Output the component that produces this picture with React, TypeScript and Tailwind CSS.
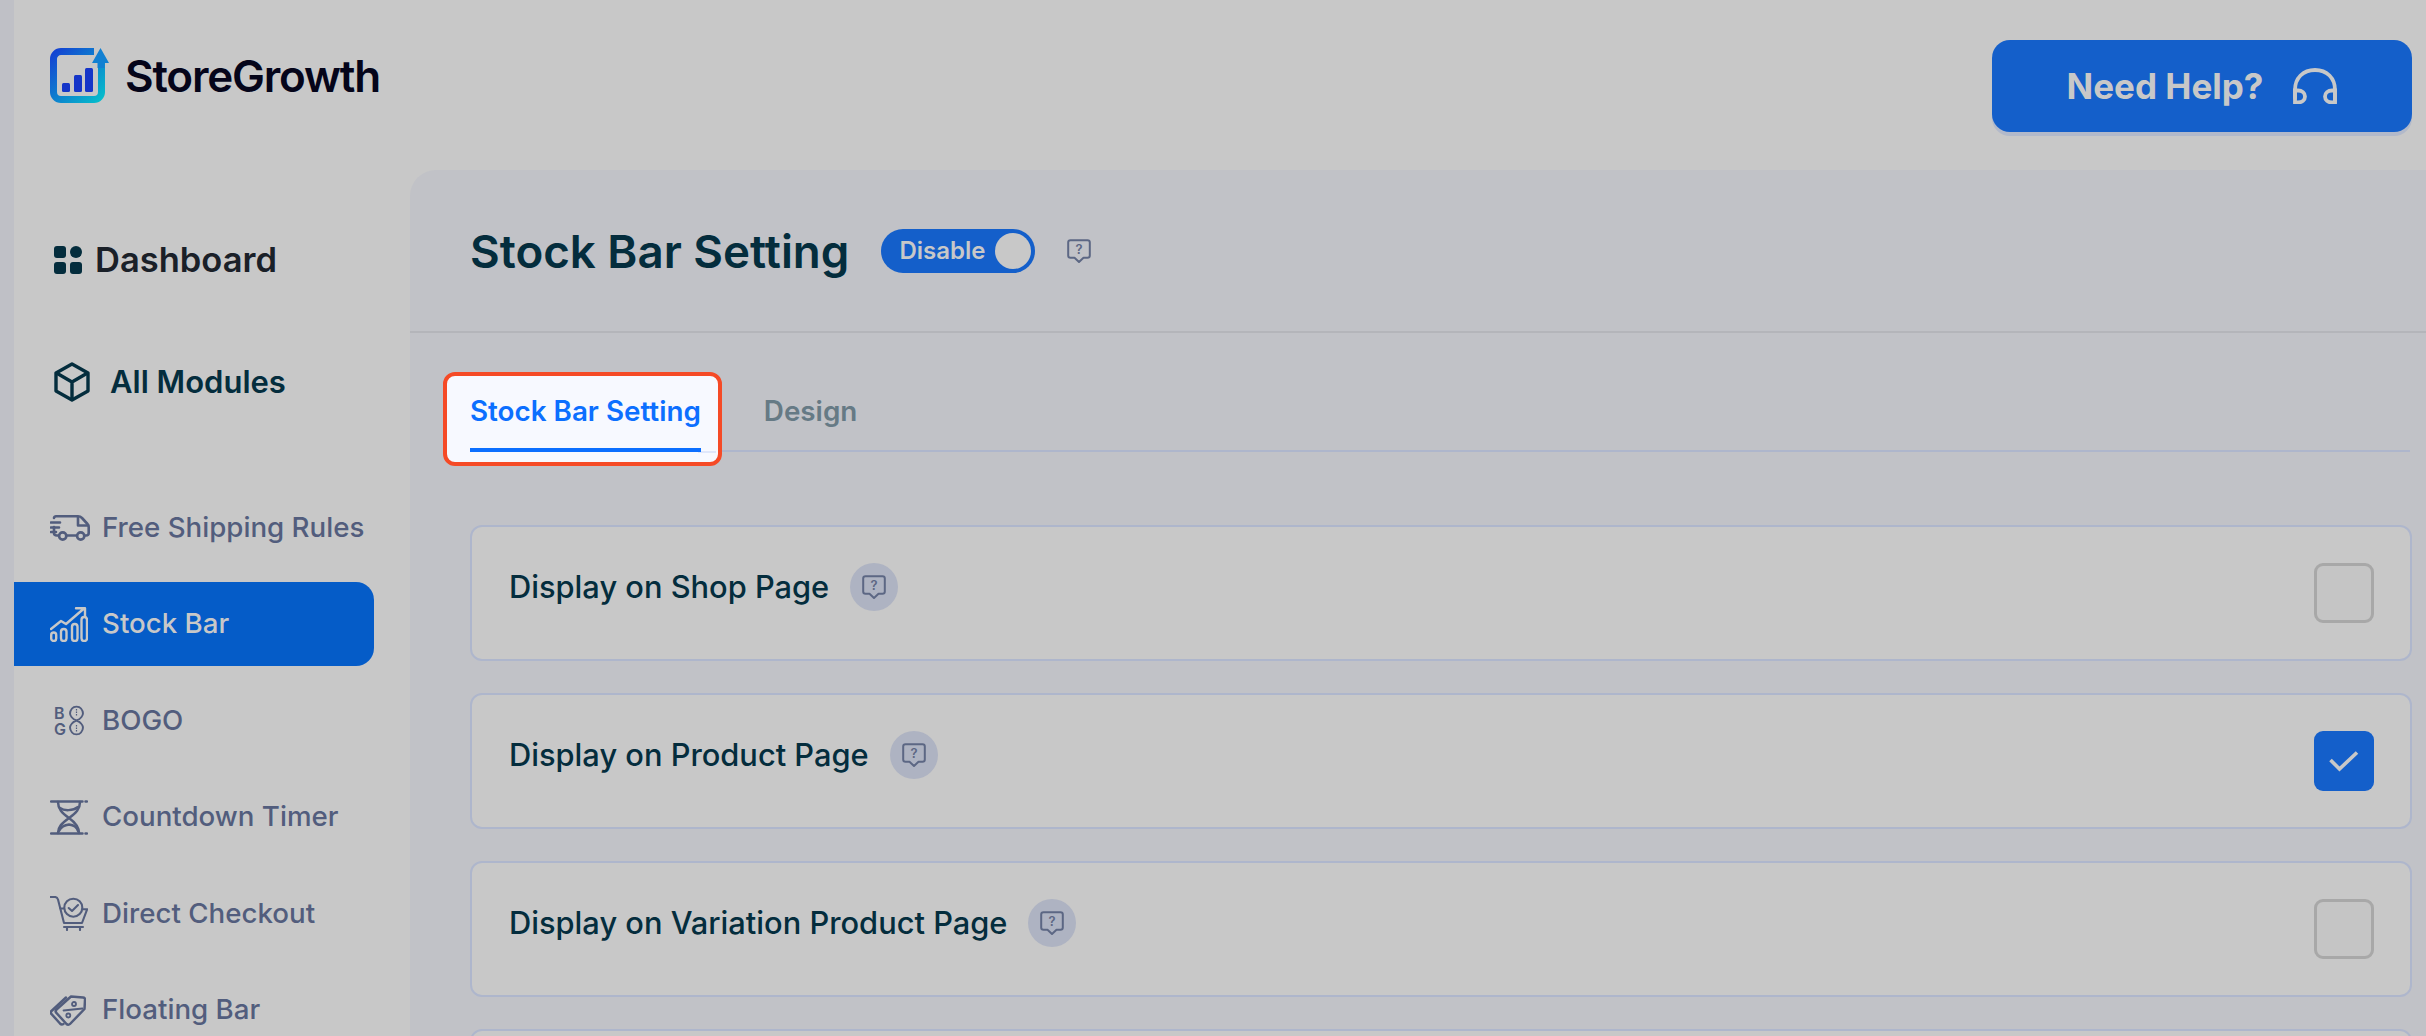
import React from "react";

const font = { fontFamily: "Inter, 'Liberation Sans', sans-serif" };

function Logo() {
  return (
    <svg width="60" height="56" viewBox="0 0 60 56" fill="none">
      <defs>
        <linearGradient id="lg" x1="0" y1="0" x2="1" y2="1">
          <stop offset="0" stopColor="#1442d2" />
          <stop offset="1" stopColor="#06bccb" />
        </linearGradient>
      </defs>
      <path d="M44 3.5H11A7.5 7.5 0 0 0 3.5 11V44A7.5 7.5 0 0 0 11 51.5H44A7.5 7.5 0 0 0 51.5 44V14" stroke="url(#lg)" strokeWidth="7" />
      <path d="M42 15L50.5 0L59 15H54.5V20H47.5V15Z" fill="#1280d2" />
      <rect x="12" y="35" width="8" height="9" rx="1.5" fill="#1535c8" />
      <rect x="24" y="27" width="8" height="17" rx="1.5" fill="#1535c8" />
      <rect x="35" y="20" width="8" height="24" rx="1.5" fill="#1535c8" />
    </svg>
  );
}

function DashIcon() {
  return (
    <svg width="28" height="28" viewBox="0 0 28 28" fill="#042d3d">
      <rect x="0" y="0" width="12" height="12" rx="3" />
      <circle cx="22" cy="6" r="6" />
      <rect x="0" y="16" width="12" height="12" rx="3" />
      <rect x="16" y="16" width="12" height="12" rx="3" />
    </svg>
  );
}

function BoxIcon() {
  return (
    <svg width="36" height="40" viewBox="0 0 36 40" fill="none" stroke="#042d3d" strokeWidth="3.4" strokeLinejoin="round">
      <path d="M18 2L34 11V29L18 38L2 29V11Z" />
      <path d="M2.5 11L18 20L33.5 11M18 20V38" />
    </svg>
  );
}

const N = "#525d7d";

function TruckIcon() {
  return (
    <svg width="40" height="26" viewBox="0 0 40 26" fill="none" stroke={N} strokeWidth="2.6" strokeLinecap="round" strokeLinejoin="round">
      <path d="M4 3C4 2 5 1.3 6 1.3H28C30 1.3 31 2 32 3L37.5 9C38.5 10 38.7 11 38.7 12V18C38.7 19.5 38 20.5 36 20.5H35" />
      <path d="M28 2V10.5H38" />
      <path d="M1 7.5H10M1 12.5H9M1 17H6" />
      <path d="M4 12V18C4 19.5 5 20.5 7 20.5H8.5M17 20.5H26.5" />
      <circle cx="12.7" cy="21" r="3.6" />
      <circle cx="30.7" cy="21" r="3.6" />
    </svg>
  );
}

function StockIcon({ color }: { color: string }) {
  return (
    <svg width="38" height="35" viewBox="0 0 38 35" fill="none" stroke={color} strokeWidth="2.4" strokeLinecap="round" strokeLinejoin="round">
      <rect x="1.2" y="25.5" width="5" height="8.5" rx="2.5" />
      <rect x="11" y="22" width="5.5" height="12" rx="2.7" />
      <rect x="22" y="17" width="5.5" height="17" rx="2.7" />
      <rect x="31.5" y="10" width="5.5" height="24" rx="2.7" />
      <path d="M1 22L11 14L16 17L34 1.5M26 1.2H35V9" />
    </svg>
  );
}

function BogoIcon() {
  return (
    <span className="flex items-center pl-[4px]">
      <span className="flex w-[15px] flex-col text-[16px] leading-[16px] font-semibold text-[#525d7d]">
        <span>B</span>
        <span>G</span>
      </span>
      <svg width="15" height="31" viewBox="0 0 15 31" fill="none" stroke={N} strokeWidth="1.9">
        <path d="M2.5 12C4 14 6 15 7.5 15.5C9 16 11 17 12.5 19C14.5 21.5 14 25 12 27.5C10 30 5 30 3 27.5C1 25 0.5 21.5 2.5 19C4 17 6 16 7.5 15.5C9 15 11 14 12.5 12C14.5 9.5 14 6 12 3.5C10 1 5 1 3 3.5C1 6 0.5 9.5 2.5 12Z" />
        <path d="M7.5 4V11M7.5 20V27" strokeWidth="1.2" strokeDasharray="1.5 1" />
      </svg>
    </span>
  );
}

function HourglassIcon() {
  return (
    <svg width="38" height="35" viewBox="0 0 38 35" fill="none" stroke={N} strokeWidth="2.5" strokeLinecap="round" strokeLinejoin="round">
      <path d="M1 1.5H32.5M35.5 1.5H37M1 33.5H32.5M35.5 33.5H37" />
      <path d="M8 2C8 9 12 13 19 18C26 23 29 27 29 33M30 2C30 9 26 13 19 18C12 23 8 27 8 33" />
      <path d="M10 8C14 11 23 11 28 7" />
      <path d="M9 31C11 27 15 25 19 24.5C23 25 27 27 28 31" />
    </svg>
  );
}

function CartIcon() {
  return (
    <svg width="38" height="35" viewBox="0 0 38 35" fill="none" stroke={N} strokeWidth="2.1" strokeLinecap="round" strokeLinejoin="round">
      <path d="M0.6 1H5C6.5 1 7.5 2 8 3.5L14 27H32L37.2 13.2H32.4" />
      <path d="M10.5 12.5H14" />
      <circle cx="23.3" cy="11.7" r="9" />
      <path d="M18.7 12L22 15L28 9" />
      <path d="M14 31H33M17 31V34M30 31V34" />
    </svg>
  );
}

function TagIcon() {
  return (
    <svg width="36" height="31" viewBox="0 0 36 31" fill="none" stroke={N} strokeWidth="2.5" strokeLinecap="round" strokeLinejoin="round">
      <path d="M21 1.5L33 2.5C34.5 2.6 35.3 3.5 35 5L34.5 14L20 29C19 30 17.5 30 16.5 29L6.5 18C5.5 17 5.5 15.5 6.5 14.5Z" />
      <path d="M16 2.5L1.5 16C0.5 17 0.5 18 1.5 19L10 28.5C11 29.5 12.5 29.5 13.5 29" />
      <path d="M13.5 15.5L32.5 13.5" strokeWidth="1.8" />
      <circle cx="24" cy="9" r="2" strokeWidth="1.8" />
      <circle cx="18.3" cy="20.5" r="2" strokeWidth="1.8" />
    </svg>
  );
}

function HelpIcon() {
  return (
    <svg width="24" height="24" viewBox="0 0 24 24" fill="none">
      <path d="M3.5 1.2H20.5C21.8 1.2 22.8 2.2 22.8 3.5V16.5C22.8 17.8 21.8 18.8 20.5 18.8H16.5L12 23L7.5 18.8H3.5C2.2 18.8 1.2 17.8 1.2 16.5V3.5C1.2 2.2 2.2 1.2 3.5 1.2Z" stroke="#5c6784" strokeWidth="2" strokeLinejoin="round" />
      <text x="12" y="14.5" textAnchor="middle" fontSize="13" fontWeight="600" fontFamily="Inter, sans-serif" fill="#5c6784">?</text>
    </svg>
  );
}

function Headphones() {
  return (
    <svg width="44" height="36" viewBox="0 0 44 36" fill="none" stroke="#c8c8c8" strokeWidth="3.8" strokeLinecap="round">
      <path d="M2 30V22C2 10 10 2 22 2C34 2 42 10 42 22V34" />
      <path d="M2 22.5H5C9 22.5 12 25 12 28.5C12 32 9 34.5 5 34.5H2Z" />
      <path d="M42 22.5H39C35 22.5 32 25 32 28.5C32 32 35 34.5 39 34.5H42Z" />
    </svg>
  );
}

function Check() {
  return (
    <svg width="30" height="24" viewBox="0 0 30 24" fill="none" stroke="#c8c8c8" strokeWidth="3.6">
      <path d="M1.5 11L10.5 20L28 3.5" />
    </svg>
  );
}

function NavItem({ label, icon, active = false }: { label: string; icon: React.ReactNode; active?: boolean }) {
  return (
    <div className={active ? "flex h-[84px] w-[360px] items-center rounded-r-[18px] bg-[#055cc8] pl-[36px] text-[#c8c8c8]" : "flex h-[84px] w-[360px] items-center pl-[36px] text-[#525d7d]"}>
      <span className="flex w-[52px] shrink-0 items-center">{icon}</span>
      <span className="text-[27.7px] font-medium whitespace-nowrap">{label}</span>
    </div>
  );
}

function Row({ label, checked = false }: { label: string; checked?: boolean }) {
  return (
    <div className="flex h-[136px] shrink-0 items-start justify-between rounded-[12px] border-2 border-[#aeb6cc] bg-[#c8c8c8] pt-[36px] pr-[36px] pl-[37px]">
      <div className="flex items-center gap-[21px]">
        <span className="text-[30.8px] font-medium whitespace-nowrap text-[#042d3d]">{label}</span>
        <span className="flex h-[48px] w-[48px] items-center justify-center rounded-full bg-[#aeb3c2]">
          <HelpIcon />
        </span>
      </div>
      {checked ? (
        <div className="flex h-[60px] w-[60px] items-center justify-center rounded-[9px] bg-[#145fca]">
          <Check />
        </div>
      ) : (
        <div className="h-[60px] w-[60px] rounded-[9px] border-[3px] border-[#a8a8a8] bg-[#c5c5c5]" />
      )}
    </div>
  );
}

export default function App() {
  return (
    <div style={font} className="flex h-screen w-full overflow-hidden bg-[#c8c8c8]">
      <div className="w-[14px] shrink-0 bg-[#bfc0c6]" />
      <div className="flex min-w-0 flex-1 flex-col">
        <header className="flex h-[170px] shrink-0 items-start justify-between pr-[14px]">
          <div className="flex items-center gap-[15px] pt-[48px] pl-[36px]">
            <Logo />
            <span className="text-[44px] leading-[50px] font-semibold tracking-[-1.2px] text-[#05051a]">StoreGrowth</span>
          </div>
          <div className="mt-[40px] flex h-[92px] w-[420px] items-center justify-center gap-[30px] rounded-[18px] bg-[#145fca] shadow-[0_4px_0_#b2b9ca]">
            <span className="text-[35px] font-bold text-[#c8c8c8]">Need Help?</span>
            <Headphones />
          </div>
        </header>
        <div className="flex min-h-0 flex-1">
          <aside className="w-[396px] shrink-0 pt-[70px]">
            <div className="flex h-[40px] items-center gap-[13px] pl-[40px]">
              <DashIcon />
              <span className="text-[34.5px] font-semibold text-[#1a2028]">Dashboard</span>
            </div>
            <div className="mt-[82px] flex h-[40px] items-center gap-[20px] pl-[40px]">
              <BoxIcon />
              <span className="text-[31px] font-semibold text-[#042d3d]">All Modules</span>
            </div>
            <nav className="mt-[83.5px] flex flex-col gap-[12.5px]">
              <NavItem label="Free Shipping Rules" icon={<TruckIcon />} />
              <NavItem label="Stock Bar" icon={<StockIcon color="#c8c8c8" />} active />
              <NavItem label="BOGO" icon={<BogoIcon />} />
              <NavItem label="Countdown Timer" icon={<HourglassIcon />} />
              <NavItem label="Direct Checkout" icon={<CartIcon />} />
              <NavItem label="Floating Bar" icon={<TagIcon />} />
            </nav>
          </aside>
          <main className="min-w-0 flex-1 rounded-tl-[26px] bg-[#c1c2c7]">
            <div className="flex h-[163px] items-center border-b-2 border-[#b4b5ba] pl-[60px]">
              <h1 className="mt-[3px] text-[45.7px] font-semibold whitespace-nowrap text-[#042d3d]">Stock Bar Setting</h1>
              <div className="ml-[32px] flex h-[44px] w-[154px] items-center justify-between rounded-full bg-[#145fca] pr-[4px] pl-[18px]">
                <span className="text-[24px] font-semibold text-[#c8c8c8]">Disable</span>
                <span className="h-[36px] w-[36px] rounded-full bg-[#c8c8c8]" />
              </div>
              <span className="ml-[32px]"><HelpIcon /></span>
            </div>
            <div className="relative mr-[16px] ml-[60px] flex gap-[63px] border-b-2 border-[#aeb6cc] pt-[59px]">
              <div className="absolute top-[39px] -left-[27px] h-[94px] w-[279px] rounded-[12px] border-4 border-[#f54a26] bg-[#f7f9ff]">
                <div className="absolute top-[75px] right-[2px] h-[2px] w-[18px] bg-[#dfe7fb]" />
              </div>
              <div className="relative -mb-[2px] border-b-4 border-[#0c6fff] pb-[18px] text-[27.8px] leading-[38px] font-semibold whitespace-nowrap text-[#0c6fff]">Stock Bar Setting</div>
              <div className="relative text-[27.8px] leading-[38px] font-semibold text-[#667a85]">Design</div>
            </div>
            <div className="mt-[73px] mr-[14px] ml-[60px] flex flex-col gap-[32px]">
              <Row label="Display on Shop Page" />
              <Row label="Display on Product Page" checked />
              <Row label="Display on Variation Product Page" />
              <div className="h-[136px] shrink-0 rounded-[12px] border-2 border-[#aeb6cc] bg-[#c8c8c8]" />
            </div>
          </main>
        </div>
      </div>
    </div>
  );
}
